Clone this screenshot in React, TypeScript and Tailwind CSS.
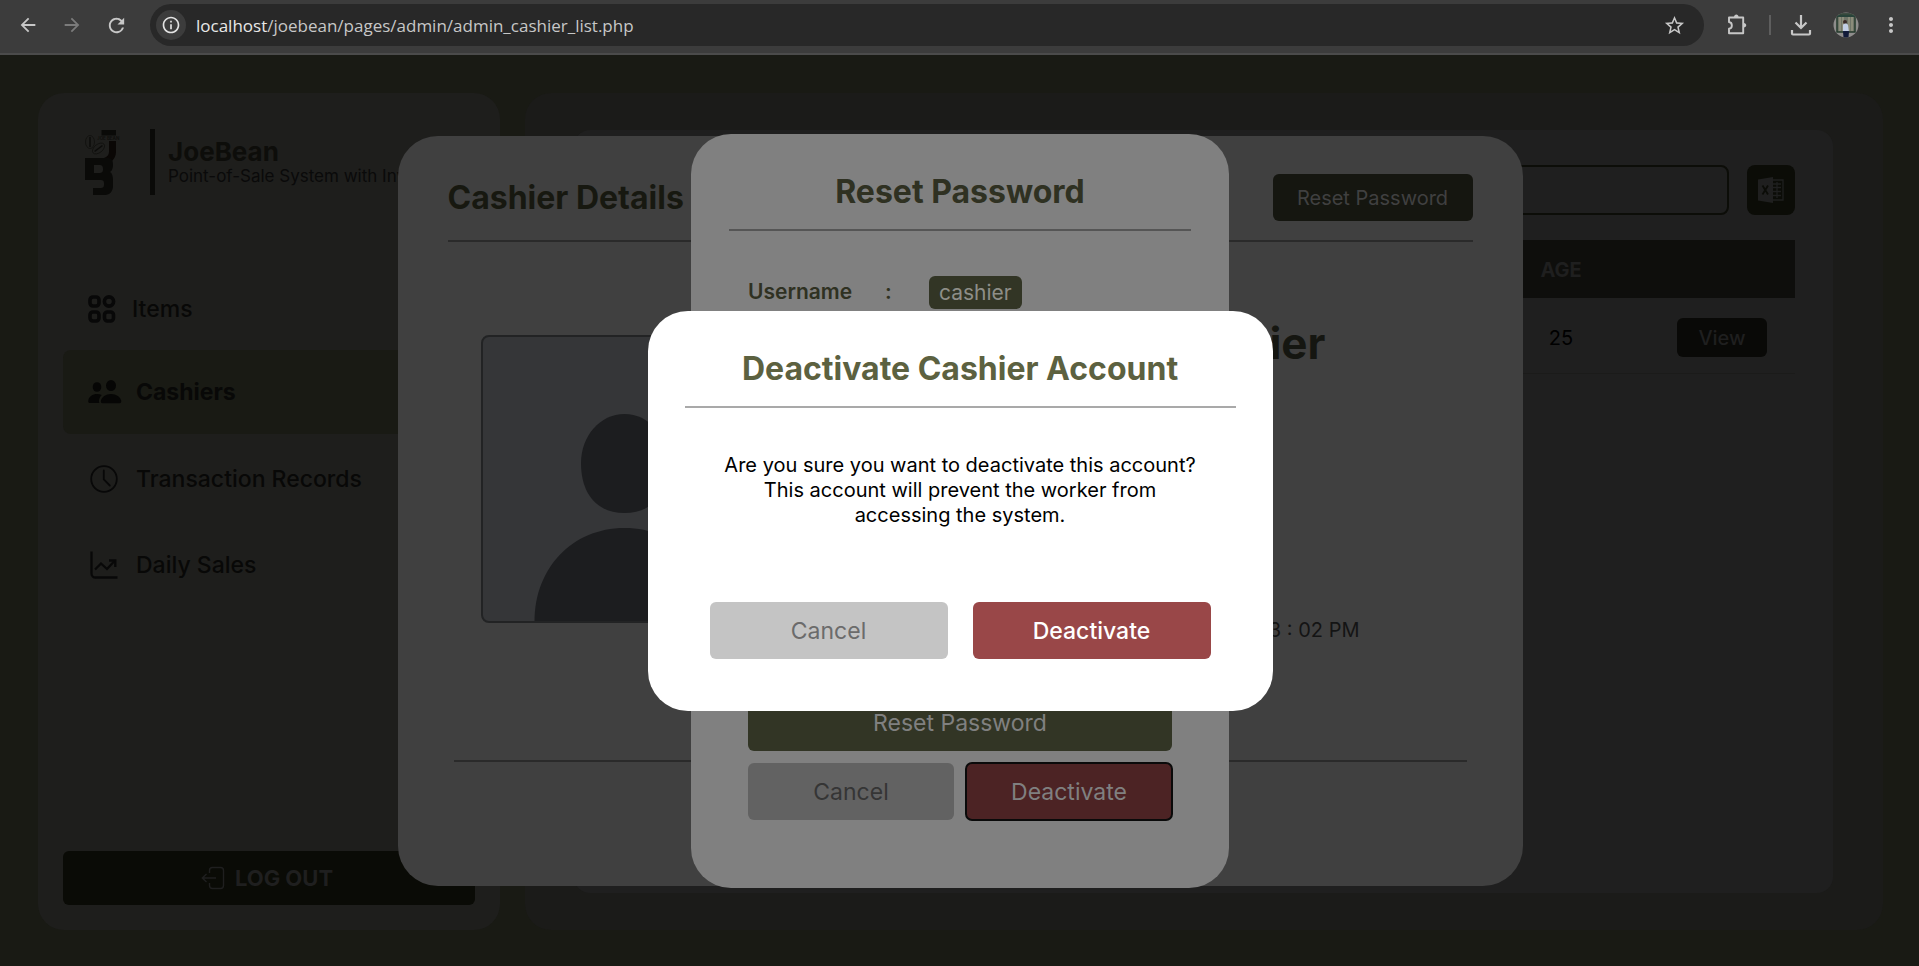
import { MdArrowBack, MdArrowForward, MdRefresh, MdInfoOutline, MdStarBorder, MdMoreVert } from "react-icons/md";
import type { ReactNode } from "react";

function Logo() {
  return (
    <svg viewBox="0 0 40 66" className="h-[66px] w-10" aria-label="Joe Bean logo" role="img">
      <path d="M16.500 1h14.500v5.500H16.500z" fill="#0a0a08" />
      <path d="M24 12h7v11c0 4-2 7-4 9h-7l-1-3c3-1 5-3 5-6z" fill="#0a0705" />
      <path
        fillRule="evenodd"
        d="M0 29h24c3 0 4 3 4 7 0 3-1 6-3 7 2 1 3 4 3 8v6c0 5-3 9-8 9H8v-7h8c2 0 3-1 3-3v-2c0-2-1-3-3-3H0zM9 36v8h5c3 0 4-1 4-4s-1-4-4-4z"
        fill="#0a0a08"
      />
      <ellipse cx="5" cy="13" rx="4.500" ry="6.500" fill="none" stroke="#10100e" strokeWidth=".8" />
      <path d="M5 8v10" stroke="#0c0c0a" strokeWidth="1.500" />
      <ellipse cx="13.500" cy="19.500" rx="7" ry="4.200" transform="rotate(-38 13.500 19.500)" fill="none" stroke="#10100e" strokeWidth=".8" />
      <path d="M9.500 22.500l8-6" stroke="#0c0c0a" strokeWidth="1.500" />
      <text x="12" y="10.500" fontSize="4.500" fontWeight="700" fill="#0f0f0d">JOE BEAN</text>
    </svg>
  );
}

function GridIcon() {
  return (
    <svg viewBox="0 0 28 28" className="h-7 w-7" fill="none" stroke="#080808" strokeWidth="3.600">
      <rect x="2" y="2" width="9" height="9" rx="3" />
      <circle cx="21" cy="6.500" r="4.600" />
      <rect x="2" y="17" width="9" height="9" rx="3" />
      <rect x="16.500" y="17" width="9" height="9" rx="3" />
    </svg>
  );
}

function PeopleIcon() {
  return (
    <svg viewBox="0 0 34 24" className="h-6 w-[34px]" fill="#060605">
      <ellipse cx="9" cy="7" rx="4.300" ry="4.800" />
      <ellipse cx="23" cy="5.600" rx="5" ry="5.500" />
      <path d="M11.500 23H1.500C.5 23 0 22 .3 20.500 1 16.500 4.500 14 9 14c1.800 0 3.400.4 4.800 1-2 1.800-3 4.500-2.800 6.500 0 .6.200 1.100.5 1.500z" />
      <path d="M14.500 23.300c-1.300 0-1.900-1-1.600-2.500C13.700 17 17.500 14 23 14s9.400 3 10.200 6.800c.3 1.500-.4 2.500-1.700 2.500z" />
    </svg>
  );
}

function ClockIcon() {
  return (
    <svg viewBox="0 0 28 28" className="h-7 w-7" fill="none" stroke="#080808" strokeWidth="1.800" strokeLinecap="round">
      <circle cx="14" cy="14" r="12.800" />
      <path d="M13.800 5.500v9l6 6" />
    </svg>
  );
}

function ChartIcon() {
  return (
    <svg viewBox="0 0 28 28" className="h-7 w-7" fill="none" stroke="#080808" strokeWidth="2.300">
      <path d="M1.500.5v22a4 4 0 0 0 4 4H27.500" />
      <path d="M5 18.500l6-6 6 5.500 8-8.500" />
      <path d="M19 9.500h6.300v6.500" />
    </svg>
  );
}

function ExitIcon() {
  return (
    <svg viewBox="0 0 24 24" className="h-6 w-6" fill="none" stroke="#1f1f1f" strokeWidth="1.400">
      <path d="M8.500 7V4.500a3 3 0 0 1 3-3h8a3 3 0 0 1 3 3v15a3 3 0 0 1-3 3h-8a3 3 0 0 1-3-3V17" />
      <path d="M15 12H1.500M5.500 8L1.300 12l4.200 4" />
    </svg>
  );
}

function ExcelIcon() {
  return (
    <svg viewBox="0 0 26 26" className="size-[26px]">
      <path d="M0 2.500L15 0v26L0 23.500z" fill="#1f1f1f" />
      <path d="M15 3h10v20H15M15 7h8M15 10.500h8M15 14.500h8M15 18.500h8M19 5v16" fill="none" stroke="#1f1f1f" strokeWidth="1.300" />
      <path d="M4.500 8.500l5.500 9M10 8.500l-5.500 9" stroke="#0b0c07" strokeWidth="1.800" />
    </svg>
  );
}

function ExtensionsIcon() {
  return (
    <svg viewBox="0 0 22 22" className="size-[22px]" fill="none" stroke="currentColor" strokeWidth="1.900" strokeLinejoin="round">
      <path d="M3 3.500h14.200v15.700H3v-4.400c3.800-.6 3.800-6.200 0-6.800z" />
      <path d="M8 3c0-3.400 4.600-3.400 4.600 0zM17.700 9c3.400 0 3.400 4.600 0 4.600z" fill="currentColor" stroke="none" />
    </svg>
  );
}

function DownloadsIcon() {
  return (
    <svg viewBox="0 0 22 22" className="size-[22px]" fill="none" stroke="currentColor" strokeWidth="2.200">
      <path d="M11 1v12.500M5.500 8.500L11 14l5.500-5.500M2 16v3.500c0 .6.400 1 1 1h16c.6 0 1-.4 1-1V16" />
    </svg>
  );
}

function Avatar() {
  return (
    <svg viewBox="0 0 26 26" className="h-[26px] w-[26px]" aria-label="Profile" role="img">
      <defs>
        <clipPath id="avatar-clip">
          <circle cx="13" cy="13" r="12.500" />
        </clipPath>
      </defs>
      <g clipPath="url(#avatar-clip)">
        <rect width="26" height="26" fill="#8f8d8c" />
        <rect x="4" y="2" width="18" height="18" fill="#6f7468" stroke="#243a2c" strokeWidth="1.500" />
        <path d="M7 3v16M10 3v16M16 3v16M19 3v16" stroke="#a9a48c" />
        <path d="M4 4h18" stroke="#28433a" strokeWidth="2" />
        <circle cx="12" cy="10" r="2" fill="#3b2b28" />
        <path d="M10 13c1-2 4-2 5 0l1 7h-6z" fill="#c3cfe6" />
        <path d="M10 19h6l-.5 7h-5z" fill="#121b3a" />
      </g>
    </svg>
  );
}

function Portrait() {
  return (
    <svg viewBox="0 0 284 284" className="block h-full w-full" aria-label="Profile picture" role="img">
      <path d="M141.500 77c24.500 0 43.500 22 43.500 49 0 31-16 50-43.500 50S98 157 98 126c0-27 19-49 43.500-49z" fill="#1c1d1f" />
      <path d="M51.500 284c0-52 37-93 90-93s90 41 90 93z" fill="#1c1d1f" />
    </svg>
  );
}

function BrowserBar() {
  return (
    <header className="flex h-[55px] shrink-0 items-center border-b-2 border-[#4b4b4b] bg-[#3c3c3c] px-4 pt-1 pb-[7px] text-[#c7c7c7]">
      <div className="flex items-center gap-5 pr-[22px]">
        <button aria-label="Back" className="grid size-6 place-items-center"><MdArrowBack size={22} /></button>
        <button aria-label="Forward" className="grid size-6 place-items-center text-[#7b7b7b]"><MdArrowForward size={22} /></button>
        <button aria-label="Reload" className="grid size-6 place-items-center"><MdRefresh size={23} /></button>
      </div>
      <div className="flex h-[42px] flex-1 items-center rounded-full bg-[#282828] pr-[18px] pl-1.5">
        <button aria-label="Site information" className="grid size-[30px] place-items-center rounded-full bg-[#3c3c3c] text-[#e3e3e3]">
          <MdInfoOutline size={20} />
        </button>
        <p className="ml-2.5 flex-1 pt-px font-['Open_Sans','Noto_Sans',sans-serif] text-[17px] text-[#c7c7c7]">
          <span className="text-[#e8e8e8]">localhost</span>/joebean/pages/admin/admin_cashier_list.php
        </p>
        <button aria-label="Bookmark"><MdStarBorder size={23} /></button>
      </div>
      <div className="flex items-center pl-[22px]">
        <button aria-label="Extensions"><ExtensionsIcon /></button>
        <span className="mr-[19px] ml-[21px] h-5 w-0.5 bg-[#5e5e5e]" />
        <button aria-label="Downloads"><DownloadsIcon /></button>
        <button aria-label="Account" className="ml-[21px]"><Avatar /></button>
        <button aria-label="Menu" className="ml-5"><MdMoreVert size={24} /></button>
      </div>
    </header>
  );
}

function NavItem({ icon, label, active, compact }: { icon: ReactNode; label: string; active?: boolean; compact?: boolean }) {
  return (
    <a
      href="#"
      className={
        active
          ? "flex h-[84px] items-center gap-4 rounded-lg bg-[#191a14] pl-[25px] text-[23px] font-bold text-[#080807]"
          : "flex h-[84px] items-center gap-4 rounded-lg pt-0.5 pl-[25px] text-[23px] font-medium text-[#080807]"
      }
    >
      <span className={compact ? "grid w-7 place-items-center" : "grid w-8 place-items-center"}>{icon}</span>
      {label}
    </a>
  );
}

function Sidebar() {
  return (
    <aside className="flex w-[462px] shrink-0 flex-col rounded-[26px] bg-[#1e1e1c] p-[25px]">
      <div className="flex h-[88px] items-center overflow-hidden pl-[22px]">
        <Logo />
        <span className="ml-[25px] h-[66px] w-[5px] shrink-0 bg-[#0a0a08]" />
        <div className="ml-[13px] whitespace-nowrap">
          <p className="text-[26px] leading-7 font-bold text-[#0d0d0a]">JoeBean</p>
          <p className="text-[17px] leading-5 text-[#0a0a0a]">Point-of-Sale System with Inventory</p>
        </div>
      </div>
      <nav className="mt-[60px] flex flex-col">
        <NavItem icon={<GridIcon />} label="Items" compact />
        <NavItem icon={<PeopleIcon />} label="Cashiers" active />
        <div className="mt-0.5 flex flex-col gap-0.5">
          <NavItem icon={<ClockIcon />} label="Transaction Records" />
          <NavItem icon={<ChartIcon />} label="Daily Sales" />
        </div>
      </nav>
      <button className="mt-auto flex h-[54px] items-center justify-center gap-2.5 rounded-md bg-[#0a0b06] pr-1 text-[22px] font-bold text-[#1f1f1f]">
        <ExitIcon />
        LOG OUT
      </button>
    </aside>
  );
}

function CashierTable() {
  return (
    <main className="flex-1 rounded-[26px] bg-[#1b1b19] py-[37px] pr-[50px] pl-[49px]">
      <div className="h-full rounded-2xl bg-[#1f1f1f] px-[38px] py-[35px]">
        <div className="flex gap-[18px]">
          <input aria-label="Search cashiers" className="h-[50px] flex-1 rounded-lg border-2 border-[#0c0d08] bg-transparent px-4" />
          <button aria-label="Export to Excel" className="grid h-[50px] w-12 place-items-center rounded-lg bg-[#0b0c07]">
            <ExcelIcon />
          </button>
        </div>
        <table className="mt-[25px] w-full text-xl">
          <thead>
            <tr className="h-[58px] bg-[#0e0e0c] text-[#1f1f1f]">
              <th aria-label="Cashier" />
              <th className="w-40 pt-0.5 font-bold">AGE</th>
              <th aria-label="Actions" className="w-[154px]" />
            </tr>
          </thead>
          <tbody>
            <tr className="h-[75px] border-b border-[#1b1b1a]">
              <td />
              <td className="pt-1.5 text-center text-black">25</td>
              <td className="pt-1 pr-7 text-right">
                <button className="h-[39px] w-[90px] rounded-md bg-[#090907] pt-0.5 text-xl font-medium text-[#1f1f1f]">View</button>
              </td>
            </tr>
          </tbody>
        </table>
      </div>
    </main>
  );
}

function CashierDetails() {
  return (
    <div className="absolute inset-0 flex items-center justify-center pl-px">
      <section aria-label="Cashier Details" className="flex h-[750px] w-[1125px] flex-col rounded-[40px] bg-[#404040] px-[50px] pt-[38px]">
        <div className="flex items-start justify-between border-b-2 border-[#2a2a2a] pb-[19px]">
          <h2 className="mt-[3px] text-[32px] leading-[42px] font-bold text-[#171810]">Cashier Details</h2>
          <button className="h-[47px] w-[200px] rounded-md bg-[#151610] pt-0.5 text-xl text-[#404040]">Reset Password</button>
        </div>
        <div className="mt-[93px] flex justify-between px-[33px]">
          <div className="size-[288px] overflow-hidden rounded-lg border-2 border-[#222324] bg-[#353638]">
            <Portrait />
          </div>
          <div className="flex w-[320px] flex-col justify-between pr-2">
            <p className="-mt-[22px] mr-[106px] text-right text-[44px] leading-[60px] font-bold text-[#151611]">Cashier</p>
            <p className="mr-[72px] -mb-[19px] text-right text-xl leading-6 text-[#141414]">03 : 02 PM</p>
          </div>
        </div>
        <hr className="mx-1.5 mt-[137px] border-t-2 border-[#2a2a2a]" />
      </section>
    </div>
  );
}

function ResetPassword() {
  return (
    <div className="absolute inset-0 flex items-center justify-center pl-px">
      <section aria-label="Reset Password" className="flex h-[754px] w-[538px] flex-col rounded-[40px] bg-[#808080] px-[38px]">
        <h2 className="border-b-2 border-[#555555] pt-[37px] pb-4 text-center text-[32px] leading-[42px] font-bold text-[#2f3122]">
          Reset Password
        </h2>
        <div className="mt-[45px] flex items-center px-[19px] text-[21px]">
          <span className="w-[137px] font-semibold text-[#2f3122]">Username</span>
          <span className="w-11 font-semibold text-[#2f3122]">:</span>
          <span className="rounded-md bg-[#323525] px-2.5 leading-[33px] text-[#8e8e88]">cashier</span>
        </div>
        <div className="mt-auto mb-[68px] grid grid-cols-2 gap-3 px-[19px] text-[23px]">
          <button className="col-span-2 h-[57px] rounded-md bg-[#323525] pt-0.5 text-[#808080]">Reset Password</button>
          <button className="h-[57px] rounded-md bg-[#626262] pt-0.5 text-[#353535]">Cancel</button>
          <button className="h-[57px] rounded-md bg-[#4c2324] pt-0.5 text-[#808080] outline-2 -outline-offset-1 outline-[#0a0a0a]">Deactivate</button>
        </div>
      </section>
    </div>
  );
}

function DeactivateDialog() {
  return (
    <div className="absolute inset-0 flex items-center justify-center pl-px">
      <section role="dialog" aria-label="Deactivate Cashier Account" className="flex h-[400px] w-[625px] flex-col rounded-[40px] bg-white px-[37px]">
        <h2 className="border-b-2 border-[#a9a9a9] pt-[37px] pb-4 text-center text-[32px] leading-[42px] font-bold text-[#5c6140]">
          Deactivate Cashier Account
        </h2>
        <p className="mt-[45px] text-center text-xl leading-[25px] text-black">
          Are you sure you want to deactivate this account?
          <br />
          This account will prevent the worker from
          <br />
          accessing the system.
        </p>
        <div className="mt-auto mb-[52px] grid grid-cols-2 gap-[25px] px-[25px] text-[23px]">
          <button className="h-[57px] rounded-md bg-[#c4c4c4] pt-0.5 text-[#6b6b6b]">Cancel</button>
          <button className="h-[57px] rounded-md bg-[#994748] pt-0.5 font-medium text-white">Deactivate</button>
        </div>
      </section>
    </div>
  );
}

export default function App() {
  return (
    <div className="flex min-h-screen flex-col bg-[#191a14] font-[Inter,'Liberation_Sans',sans-serif]">
      <BrowserBar />
      <div className="relative flex flex-1 gap-[25px] pt-[38px] pr-9 pb-9 pl-[38px]">
        <Sidebar />
        <CashierTable />
        <CashierDetails />
        <ResetPassword />
        <DeactivateDialog />
      </div>
    </div>
  );
}
